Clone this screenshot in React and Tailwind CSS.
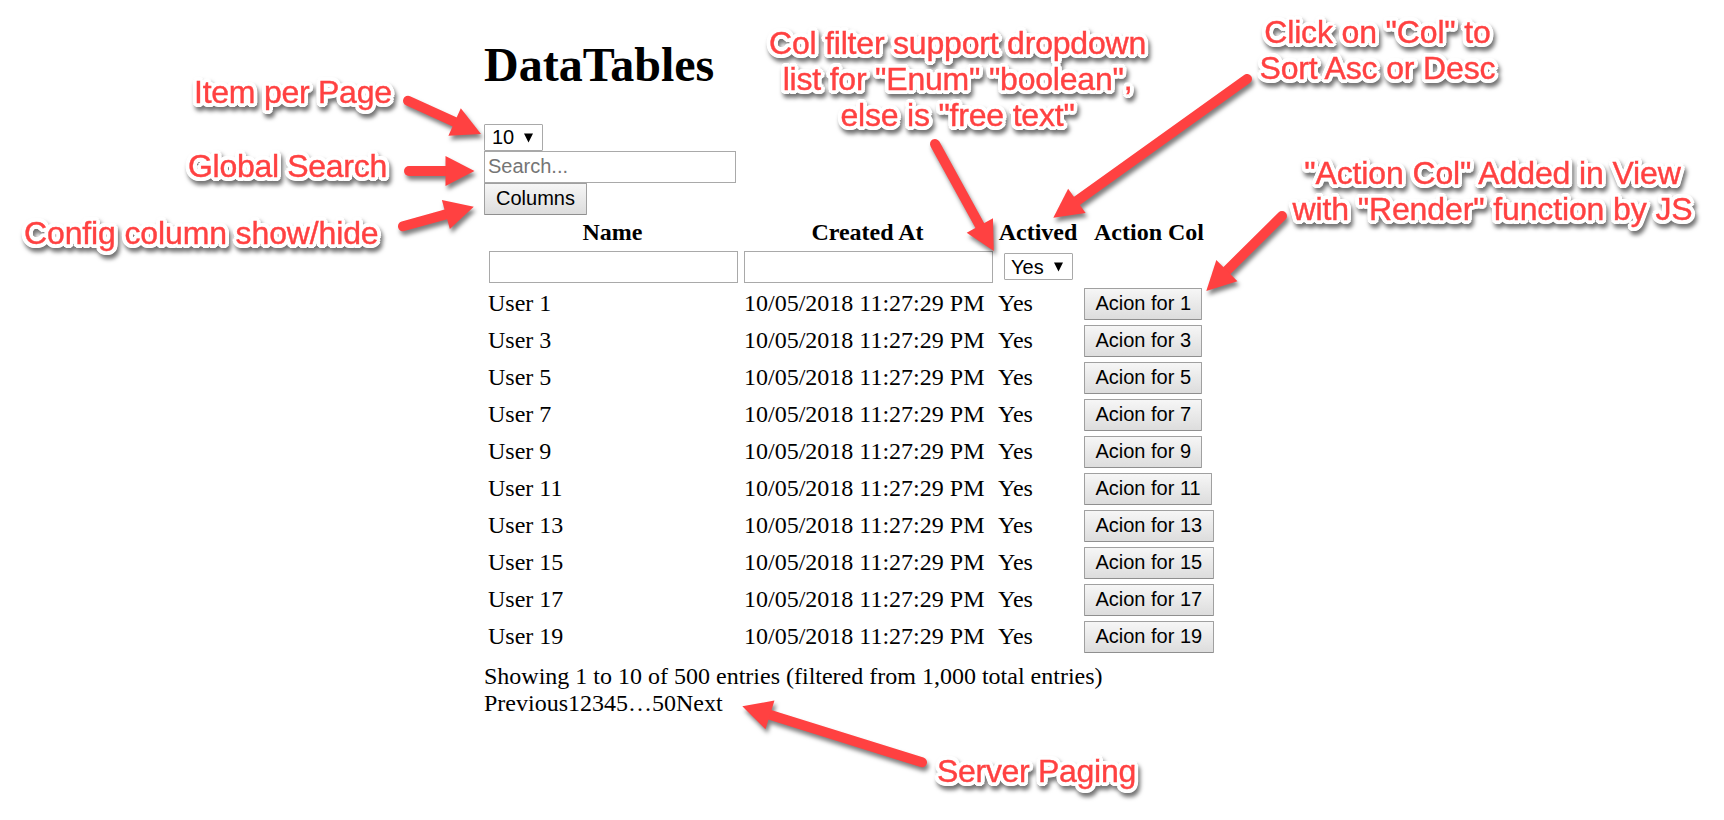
const users = [1, 3, 5, 7, 9, 11, 13, 15, 17, 19];

const arrows = [
  { from: [408, 100.8], to: [481, 134] },
  { from: [409, 171], to: [474.5, 171] },
  { from: [403, 226.3], to: [473.8, 206.7] },
  { from: [935, 144], to: [993.8, 251] },
  { from: [1247, 79], to: [1053.3, 217.8] },
  { from: [1282, 216], to: [1206.3, 291] },
  { from: [922, 762.3], to: [742.3, 706.3] },
];

function Arrow({ from, to }) {
  const dx = to[0] - from[0];
  const dy = to[1] - from[1];
  const length = Math.hypot(dx, dy);
  const ux = dx / length;
  const uy = dy / length;
  const bx = to[0] - ux * 29;
  const by = to[1] - uy * 29;
  const points = `${to[0]},${to[1]} ${bx - uy * 15},${by + ux * 15} ${bx + uy * 15},${by - ux * 15}`;
  return (
    <g fill="#ff4141" stroke="none">
      <line x1={from[0]} y1={from[1]} x2={bx + ux * 2} y2={by + uy * 2} stroke="#ff4141" strokeWidth="10" strokeLinecap="round" />
      <polygon points={points} />
    </g>
  );
}

function Note({ className, lines }) {
  return (
    <div
      className={`absolute whitespace-nowrap text-center font-['Liberation_Sans',Arial,sans-serif] text-[32px] leading-[36px] text-[#ff4141] [-webkit-text-stroke:0.4px_#ff4141] [text-shadow:4px_0_white,3.7px_1.5px_white,2.8px_2.8px_white,1.5px_3.7px_white,0_4px_white,-1.5px_3.7px_white,-2.8px_2.8px_white,-3.7px_1.5px_white,-4px_0_white,-3.7px_-1.5px_white,-2.8px_-2.8px_white,-1.5px_-3.7px_white,0_-4px_white,1.5px_-3.7px_white,2.8px_-2.8px_white,3.7px_-1.5px_white,2px_0_white,-2px_0_white,0_2px_white,0_-2px_white] drop-shadow-[2px_4px_2px_rgba(0,0,0,0.55)] ${className}`}
    >
      {lines.map((line) => (
        <div key={line}>{line}</div>
      ))}
    </div>
  );
}

function Dropdown({ value, className }) {
  return (
    <button
      type="button"
      className={`flex h-[27px] items-center justify-between rounded-[1px] border border-[#a9a9a9] bg-white pr-[9px] font-['Liberation_Sans',Arial,sans-serif] text-[20px] leading-[23px] text-black ${className}`}
    >
      <span>{value}</span>
      <svg width="9" height="10" viewBox="0 0 9 10">
        <path d="M0 0.5H9L4.5 9.5Z" fill="#000" />
      </svg>
    </button>
  );
}

function PushButton({ children, className }) {
  return (
    <button
      type="button"
      className={`block h-8 rounded-[1px] border border-[#a0a0a0] border-b-[#8f8f8f] bg-linear-to-b from-[#f6f6f6] to-[#dddddd] pb-[2px] font-['Liberation_Sans',Arial,sans-serif] text-[20px] leading-[23px] text-black ${className}`}
    >
      {children}
    </button>
  );
}

function FilterInput() {
  return <input type="text" className="block h-8 w-[249px] border border-[#a9a9a9] bg-white px-1 text-[20px]" />;
}

export default function App() {
  return (
    <div className="relative h-[820px] w-[1724px] overflow-hidden bg-white font-['Liberation_Serif','Times_New_Roman',serif] text-[24px] leading-[27px] text-black">
      <main className="flex flex-col items-start pt-[38px] pl-[484px]">
        <h1 className="mb-[32px] text-[48px] leading-[54px] font-bold">DataTables</h1>
        <Dropdown value="10" className="w-[59px] pl-[7px]" />
        <input
          type="text"
          placeholder="Search..."
          className="block h-8 w-[252px] border border-[#a9a9a9] bg-white px-[3px] pb-[2px] font-['Liberation_Sans',Arial,sans-serif] text-[20px] leading-[23px] placeholder:text-[#757575]"
        />
        <PushButton className="px-[11px]">Columns</PushButton>

        <table className="w-[733px] table-fixed border-collapse">
          <colgroup>
            <col className="w-[257px]" />
            <col className="w-[255px]" />
            <col className="w-[85px]" />
            <col className="w-[136px]" />
          </colgroup>
          <thead>
            <tr className="h-[33px] align-top">
              <th className="pt-1 pr-1 pl-1 font-bold">Name</th>
              <th className="pt-1 pr-1 pl-[2px] font-bold">Created At</th>
              <th className="pt-1 pr-px pl-0 font-bold">Actived</th>
              <th className="px-[3px] pt-1 font-bold">Action Col</th>
            </tr>
            <tr className="h-[38px] align-top">
              <th className="pt-[3px] pl-[5px]"><FilterInput /></th>
              <th className="pt-[3px] pl-[3px]"><FilterInput /></th>
              <th className="pt-[5px] pl-2 font-normal"><Dropdown value="Yes" className="w-[69px] pl-[6px] pt-px" /></th>
              <th></th>
            </tr>
          </thead>
          <tbody>
            {users.map((n) => (
              <tr key={n} className="h-[37px] align-top">
                <td className="pt-1 pl-1">User {n}</td>
                <td className="pt-1 pl-[3px] whitespace-nowrap">10/05/2018 11:27:29 PM</td>
                <td className="pt-1 pl-[2px]">Yes</td>
                <td className="pt-[2px] pl-[3px]"><PushButton className="px-[10.4px]">Acion for {n}</PushButton></td>
              </tr>
            ))}
          </tbody>
        </table>

        <p className="mt-[7px]">Showing 1 to 10 of 500 entries (filtered from 1,000 total entries)</p>
        <nav className="flex">
          {["Previous", "1", "2", "3", "4", "5", "…", "50", "Next"].map((label) => (
            <a key={label}>{label}</a>
          ))}
        </nav>
      </main>

      <svg className="pointer-events-none absolute inset-0 drop-shadow-[2px_4px_2px_rgba(0,0,0,0.5)]" width="1724" height="820" viewBox="0 0 1724 820">
        {arrows.map((arrow) => (
          <Arrow key={arrow.from[0]} {...arrow} />
        ))}
      </svg>

      <Note className="top-[74px] left-[194px] tracking-[-0.25px]" lines={["Item per Page"]} />
      <Note className="top-[148px] left-[188px] tracking-[-0.3px]" lines={["Global Search"]} />
      <Note className="top-[215px] left-[24px] tracking-[-0.13px]" lines={["Config column show/hide"]} />
      <Note className="top-[25px] left-[769px] tracking-[-0.2px]" lines={["Col filter support dropdown", 'list for "Enum" "boolean",', 'else is "free text"']} />
      <Note className="top-[14px] left-[1259.5px] tracking-[-0.15px]" lines={['Click on "Col" to', "Sort Asc or Desc"]} />
      <Note className="top-[155px] left-[1292.5px] tracking-[-0.12px]" lines={['"Action Col" Added in View', 'with "Render" function by JS']} />
      <Note className="top-[753px] left-[937px] tracking-[-0.3px]" lines={["Server Paging"]} />
    </div>
  );
}
